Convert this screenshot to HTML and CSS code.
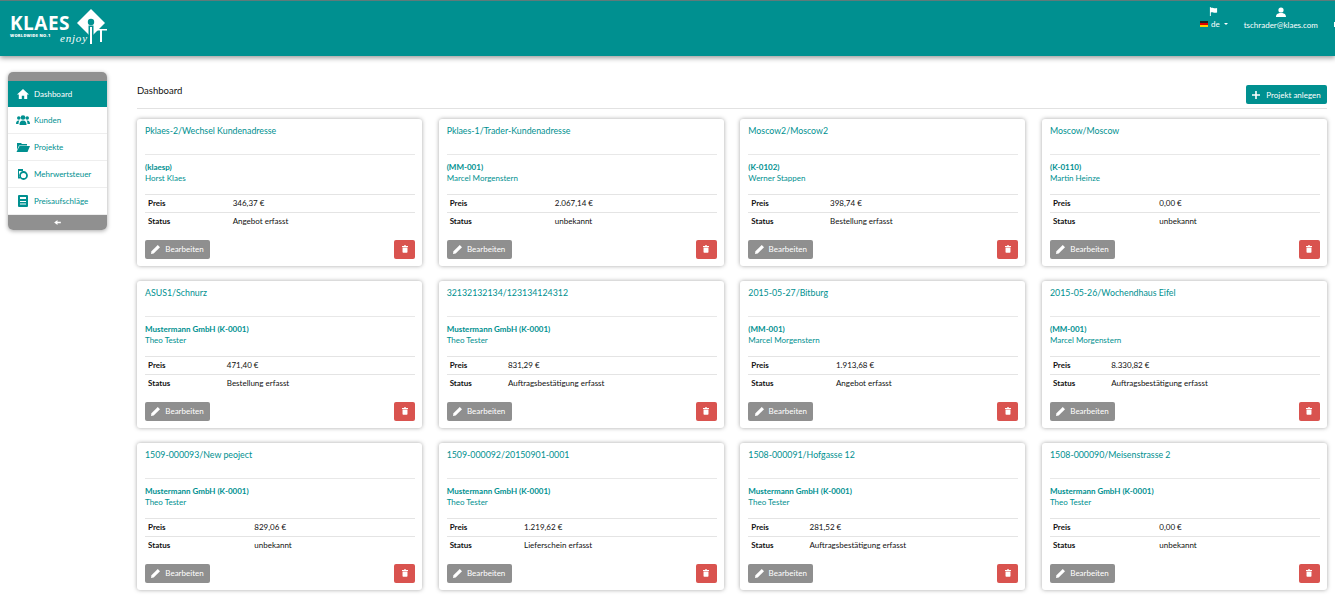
FILE: index.html
```html
<!DOCTYPE html>
<html lang="de">
<head>
<meta charset="utf-8">
<title>KLAES Dashboard</title>
<link rel="stylesheet" href="styles.css">
</head>
<body>
<header class="topbar">
  <div class="logo">
    <div class="logo-text"><span class="logo-name">KLAES</span><span class="logo-sub">WORLDWIDE NO.1</span></div>
    <span class="logo-enjoy">enjoy</span>
    <svg class="logo-mark" viewBox="0 0 30 36" width="30" height="36"><path d="M14 0 28 14 14 28 0 14Z" fill="#fff"/><circle cx="14" cy="13" r="3.200" fill="#009090"/><path d="M11.500 16.500h5V28h-5z" fill="#009090"/><path d="M13 18h2v17h-2zM18 20h12v1.500h-5V33h-2V21.500h-5z" fill="#fff"/></svg>
  </div>
  <div class="top-right">
    <div class="top-item">
      <svg class="top-icon" viewBox="0 0 10 10" width="9" height="9"><path d="M1 0h1v10H1zM2 1c2-1 3 1 7 0v5c-4 1-5-1-7 0z" fill="#fff"/></svg>
      <div class="lang"><span class="flag"></span><span>de</span><span class="caret"></span></div>
    </div>
    <div class="top-item">
      <svg class="top-icon" viewBox="0 0 10 10" width="10" height="10"><circle cx="5" cy="3" r="2.600" fill="#fff"/><path d="M0 10c0-3 2-3.500 3.500-4h3C8 6.500 10 7 10 10z" fill="#fff"/></svg>
      <span>tschrader@klaes.com</span>
    </div>
    <div class="top-sliver"></div>
  </div>
</header>
<div class="page">
  <nav class="sidebar">
    <div class="side-cap"></div>
    <a class="side-link active"><svg viewBox="0 0 14 12" width="14" height="12"><path d="M7 1 1 6.500h1.800V11h3V7.800h2.400V11h3V6.500H13z" fill="currentColor"/></svg><span>Dashboard</span></a>
    <a class="side-link"><svg viewBox="0 0 14 10" width="14" height="10"><circle cx="7" cy="2.500" r="2.300" fill="currentColor"/><circle cx="2.800" cy="3" r="1.800" fill="currentColor"/><circle cx="11.200" cy="3" r="1.800" fill="currentColor"/><path d="M3.500 10c0-3 1-4.500 3.500-4.500s3.500 1.500 3.500 4.500zM0 9c0-2 .8-3.500 2.800-3.500l.6.100C2.700 6.500 2.500 8 2.500 9zM14 9c0-2-.8-3.500-2.800-3.500l-.6.100c.7.900.9 2.400.9 3.400z" fill="currentColor"/></svg><span>Kunden</span></a>
    <a class="side-link"><svg viewBox="0 0 14 10" width="14" height="10"><path d="M1 1h4l1 1h5v1.500H3L1 8z" fill="currentColor"/><path d="M3.500 4H14l-2.500 6H.5z" fill="currentColor"/></svg><span>Projekte</span></a>
    <a class="side-link"><svg viewBox="0 0 14 12" width="14" height="12"><path d="M2 1h5v2H3v6h1v1.500H2z" fill="currentColor"/><circle cx="7.500" cy="7.500" r="3.500" fill="none" stroke="currentColor" stroke-width="1.800"/></svg><span>Mehrwertsteuer</span></a>
    <a class="side-link"><svg viewBox="0 0 14 12" width="14" height="12"><path fill-rule="evenodd" d="M3 0h8a1 1 0 0 1 1 1v10a1 1 0 0 1-1 1H3a1 1 0 0 1-1-1V1a1 1 0 0 1 1-1zM4 2v2h6V2zM4 6v1h6V6zM4 8.500v1h6v-1z" fill="currentColor"/></svg><span>Preisaufschläge</span></a>
    <div class="side-foot"><svg viewBox="0 0 8 6" width="7" height="5"><path d="M4 0v2h4v2H4v2L0 3z" fill="#fff"/></svg></div>
  </nav>
  <main class="content">
    <div class="title-row">
      <h1>Dashboard</h1>
      <button class="btn-new"><svg viewBox="0 0 10 10" width="8" height="8"><path d="M4 0h2v4h4v2H6v4H4V6H0V4h4z" fill="#fff"/></svg><span>Projekt anlegen</span></button>
    </div>
    <div class="grid">

      <article class="card">
        <h2>Pklaes-2/Wechsel Kundenadresse</h2>
        <div class="cust"><b>(klaesp)</b><span>Horst Klaes</span></div>
        <table><tr><th>Preis</th><td>346,37 €</td></tr><tr><th>Status</th><td>Angebot erfasst</td></tr></table>
        <div class="actions"><button class="btn-edit"><svg viewBox="0 0 10 10" width="9" height="9"><path d="M7.500 0 10 2.500 3 9.500 0 10l.5-3z" fill="#fff"/></svg><span>Bearbeiten</span></button><button class="btn-del"><svg viewBox="0 0 8 10" width="6" height="8"><path d="M3 0h2l.5 1H8v1.200H0V1h2.500zM.7 3h6.600v6a1 1 0 0 1-1 1H1.700a1 1 0 0 1-1-1z" fill="#fff"/></svg></button></div>
      </article>

      <article class="card">
        <h2>Pklaes-1/Trader-Kundenadresse</h2>
        <div class="cust"><b>(MM-001)</b><span>Marcel Morgenstern</span></div>
        <table><tr><th>Preis</th><td>2.067,14 €</td></tr><tr><th>Status</th><td>unbekannt</td></tr></table>
        <div class="actions"><button class="btn-edit"><svg viewBox="0 0 10 10" width="9" height="9"><path d="M7.500 0 10 2.500 3 9.500 0 10l.5-3z" fill="#fff"/></svg><span>Bearbeiten</span></button><button class="btn-del"><svg viewBox="0 0 8 10" width="6" height="8"><path d="M3 0h2l.5 1H8v1.200H0V1h2.500zM.7 3h6.600v6a1 1 0 0 1-1 1H1.700a1 1 0 0 1-1-1z" fill="#fff"/></svg></button></div>
      </article>

      <article class="card">
        <h2>Moscow2/Moscow2</h2>
        <div class="cust"><b>(K-0102)</b><span>Werner Stappen</span></div>
        <table><tr><th>Preis</th><td>398,74 €</td></tr><tr><th>Status</th><td>Bestellung erfasst</td></tr></table>
        <div class="actions"><button class="btn-edit"><svg viewBox="0 0 10 10" width="9" height="9"><path d="M7.500 0 10 2.500 3 9.500 0 10l.5-3z" fill="#fff"/></svg><span>Bearbeiten</span></button><button class="btn-del"><svg viewBox="0 0 8 10" width="6" height="8"><path d="M3 0h2l.5 1H8v1.200H0V1h2.500zM.7 3h6.600v6a1 1 0 0 1-1 1H1.700a1 1 0 0 1-1-1z" fill="#fff"/></svg></button></div>
      </article>

      <article class="card">
        <h2>Moscow/Moscow</h2>
        <div class="cust"><b>(K-0110)</b><span>Martin Heinze</span></div>
        <table><tr><th>Preis</th><td>0,00 €</td></tr><tr><th>Status</th><td>unbekannt</td></tr></table>
        <div class="actions"><button class="btn-edit"><svg viewBox="0 0 10 10" width="9" height="9"><path d="M7.500 0 10 2.500 3 9.500 0 10l.5-3z" fill="#fff"/></svg><span>Bearbeiten</span></button><button class="btn-del"><svg viewBox="0 0 8 10" width="6" height="8"><path d="M3 0h2l.5 1H8v1.200H0V1h2.500zM.7 3h6.600v6a1 1 0 0 1-1 1H1.700a1 1 0 0 1-1-1z" fill="#fff"/></svg></button></div>
      </article>

      <article class="card">
        <h2>ASUS1/Schnurz</h2>
        <div class="cust"><b>Mustermann GmbH (K-0001)</b><span>Theo Tester</span></div>
        <table><tr><th>Preis</th><td>471,40 €</td></tr><tr><th>Status</th><td>Bestellung erfasst</td></tr></table>
        <div class="actions"><button class="btn-edit"><svg viewBox="0 0 10 10" width="9" height="9"><path d="M7.500 0 10 2.500 3 9.500 0 10l.5-3z" fill="#fff"/></svg><span>Bearbeiten</span></button><button class="btn-del"><svg viewBox="0 0 8 10" width="6" height="8"><path d="M3 0h2l.5 1H8v1.200H0V1h2.500zM.7 3h6.600v6a1 1 0 0 1-1 1H1.700a1 1 0 0 1-1-1z" fill="#fff"/></svg></button></div>
      </article>

      <article class="card">
        <h2>32132132134/123134124312</h2>
        <div class="cust"><b>Mustermann GmbH (K-0001)</b><span>Theo Tester</span></div>
        <table><tr><th>Preis</th><td>831,29 €</td></tr><tr><th>Status</th><td>Auftragsbestätigung erfasst</td></tr></table>
        <div class="actions"><button class="btn-edit"><svg viewBox="0 0 10 10" width="9" height="9"><path d="M7.500 0 10 2.500 3 9.500 0 10l.5-3z" fill="#fff"/></svg><span>Bearbeiten</span></button><button class="btn-del"><svg viewBox="0 0 8 10" width="6" height="8"><path d="M3 0h2l.5 1H8v1.200H0V1h2.500zM.7 3h6.600v6a1 1 0 0 1-1 1H1.700a1 1 0 0 1-1-1z" fill="#fff"/></svg></button></div>
      </article>

      <article class="card">
        <h2>2015-05-27/Bitburg</h2>
        <div class="cust"><b>(MM-001)</b><span>Marcel Morgenstern</span></div>
        <table><tr><th>Preis</th><td>1.913,68 €</td></tr><tr><th>Status</th><td>Angebot erfasst</td></tr></table>
        <div class="actions"><button class="btn-edit"><svg viewBox="0 0 10 10" width="9" height="9"><path d="M7.500 0 10 2.500 3 9.500 0 10l.5-3z" fill="#fff"/></svg><span>Bearbeiten</span></button><button class="btn-del"><svg viewBox="0 0 8 10" width="6" height="8"><path d="M3 0h2l.5 1H8v1.200H0V1h2.500zM.7 3h6.600v6a1 1 0 0 1-1 1H1.700a1 1 0 0 1-1-1z" fill="#fff"/></svg></button></div>
      </article>

      <article class="card">
        <h2>2015-05-26/Wochendhaus Eifel</h2>
        <div class="cust"><b>(MM-001)</b><span>Marcel Morgenstern</span></div>
        <table><tr><th>Preis</th><td>8.330,82 €</td></tr><tr><th>Status</th><td>Auftragsbestätigung erfasst</td></tr></table>
        <div class="actions"><button class="btn-edit"><svg viewBox="0 0 10 10" width="9" height="9"><path d="M7.500 0 10 2.500 3 9.500 0 10l.5-3z" fill="#fff"/></svg><span>Bearbeiten</span></button><button class="btn-del"><svg viewBox="0 0 8 10" width="6" height="8"><path d="M3 0h2l.5 1H8v1.200H0V1h2.500zM.7 3h6.600v6a1 1 0 0 1-1 1H1.700a1 1 0 0 1-1-1z" fill="#fff"/></svg></button></div>
      </article>

      <article class="card">
        <h2>1509-000093/New peoject</h2>
        <div class="cust"><b>Mustermann GmbH (K-0001)</b><span>Theo Tester</span></div>
        <table><tr><th>Preis</th><td>829,06 €</td></tr><tr><th>Status</th><td>unbekannt</td></tr></table>
        <div class="actions"><button class="btn-edit"><svg viewBox="0 0 10 10" width="9" height="9"><path d="M7.500 0 10 2.500 3 9.500 0 10l.5-3z" fill="#fff"/></svg><span>Bearbeiten</span></button><button class="btn-del"><svg viewBox="0 0 8 10" width="6" height="8"><path d="M3 0h2l.5 1H8v1.200H0V1h2.500zM.7 3h6.600v6a1 1 0 0 1-1 1H1.700a1 1 0 0 1-1-1z" fill="#fff"/></svg></button></div>
      </article>

      <article class="card">
        <h2>1509-000092/20150901-0001</h2>
        <div class="cust"><b>Mustermann GmbH (K-0001)</b><span>Theo Tester</span></div>
        <table><tr><th>Preis</th><td>1.219,62 €</td></tr><tr><th>Status</th><td>Lieferschein erfasst</td></tr></table>
        <div class="actions"><button class="btn-edit"><svg viewBox="0 0 10 10" width="9" height="9"><path d="M7.500 0 10 2.500 3 9.500 0 10l.5-3z" fill="#fff"/></svg><span>Bearbeiten</span></button><button class="btn-del"><svg viewBox="0 0 8 10" width="6" height="8"><path d="M3 0h2l.5 1H8v1.200H0V1h2.500zM.7 3h6.600v6a1 1 0 0 1-1 1H1.700a1 1 0 0 1-1-1z" fill="#fff"/></svg></button></div>
      </article>

      <article class="card">
        <h2>1508-000091/Hofgasse 12</h2>
        <div class="cust"><b>Mustermann GmbH (K-0001)</b><span>Theo Tester</span></div>
        <table><tr><th>Preis</th><td>281,52 €</td></tr><tr><th>Status</th><td>Auftragsbestätigung erfasst</td></tr></table>
        <div class="actions"><button class="btn-edit"><svg viewBox="0 0 10 10" width="9" height="9"><path d="M7.500 0 10 2.500 3 9.500 0 10l.5-3z" fill="#fff"/></svg><span>Bearbeiten</span></button><button class="btn-del"><svg viewBox="0 0 8 10" width="6" height="8"><path d="M3 0h2l.5 1H8v1.200H0V1h2.500zM.7 3h6.600v6a1 1 0 0 1-1 1H1.700a1 1 0 0 1-1-1z" fill="#fff"/></svg></button></div>
      </article>

      <article class="card">
        <h2>1508-000090/Meisenstrasse 2</h2>
        <div class="cust"><b>Mustermann GmbH (K-0001)</b><span>Theo Tester</span></div>
        <table><tr><th>Preis</th><td>0,00 €</td></tr><tr><th>Status</th><td>unbekannt</td></tr></table>
        <div class="actions"><button class="btn-edit"><svg viewBox="0 0 10 10" width="9" height="9"><path d="M7.500 0 10 2.500 3 9.500 0 10l.5-3z" fill="#fff"/></svg><span>Bearbeiten</span></button><button class="btn-del"><svg viewBox="0 0 8 10" width="6" height="8"><path d="M3 0h2l.5 1H8v1.200H0V1h2.500zM.7 3h6.600v6a1 1 0 0 1-1 1H1.700a1 1 0 0 1-1-1z" fill="#fff"/></svg></button></div>
      </article>

    </div>
  </main>
</div>
</body>
</html>
```
FILE: styles.css
```css
* { box-sizing: border-box; }
html, body { margin: 0; padding: 0; overflow: hidden; }
body { width: 1335px; height: 600px; background: #fff; font-family: Lato, sans-serif; font-size: 8px; color: #111; }

.topbar { height: 56px; background: #009090; border-top: 1px solid #5f7a7a; box-shadow: 0 2px 5px rgba(0,0,0,.4); display: flex; color: #fff; overflow: hidden; }
.logo { position: relative; flex: none; display: flex; width: 120px; padding: 13px 0 0 10px; font-family: "Open Sans", sans-serif; }
.logo-text { display: flex; flex-direction: column; }
.logo-name { font-weight: 700; font-size: 19px; line-height: 19px; letter-spacing: .5px; }
.logo-sub { font-weight: 800; font-size: 4px; line-height: 6px; letter-spacing: .25px; }
.logo-enjoy { position: absolute; left: 60px; top: 31px; font-family: "Liberation Serif", serif; font-style: italic; font-size: 11px; letter-spacing: .8px; }
.logo-mark { position: absolute; left: 77px; top: 8px; }
.top-right { display: flex; flex: none; gap: 16px; margin-left: 1080px; padding-top: 6px; }
.top-item { display: flex; flex-direction: column; align-items: center; gap: 3px; }
.top-sliver { width: 1px; height: 5px; margin: 15px 0 0 0; background: #fff; }
.top-icon { display: block; }
.lang { display: flex; align-items: center; gap: 3px; }
.flag { width: 8px; height: 6px; background: linear-gradient(#222 33%, #d00 33%, #d00 66%, #fc0 66%); }
.caret { border: 2px solid transparent; border-top-color: #fff; border-bottom: 0; margin-left: 1px; }

.page { display: flex; align-items: flex-start; padding: 16px 8px 0; gap: 30px; }
.sidebar { width: 99px; flex: none; background: #fff; border-radius: 5px; overflow: hidden; box-shadow: 0 1px 4px rgba(0,0,0,.35); color: #009090; }
.side-cap { height: 9px; background: #909090; }
.side-foot { height: 15px; background: #909090; display: flex; align-items: center; justify-content: center; }
.side-link { height: 27px; display: flex; align-items: center; border-bottom: 1px solid #eee; padding-left: 8px; }
.side-link svg { flex: none; margin-right: 4px; }
.side-link.active { height: 26px; background: #009090; color: #fff; border-bottom: 0; }

.content { flex: 1; min-width: 0; }
.title-row { height: 37px; display: flex; justify-content: space-between; align-items: flex-start; border-bottom: 1px solid #e2e2e2; margin-bottom: 10px; }
h1 { margin: 12px 0 0; font-size: 9.500px; font-weight: 400; line-height: 13px; }
.btn-new { margin-top: 13px; width: 81px; height: 19px; border: 0; border-radius: 2px; background: #009090; color: #fff; font: inherit; display: flex; align-items: center; justify-content: center; gap: 6px; padding: 0; }

.grid { display: grid; grid-template-columns: repeat(4, 285px); column-gap: 16.670px; row-gap: 15px; }
.card { height: 147px; background: #fff; border-radius: 3px; box-shadow: 0 0 4px rgba(0,0,0,.35); padding: 6px 7px 0 8px; display: flex; flex-direction: column; }
h2 { margin: 0; height: 30px; font-size: 8.800px; font-weight: 400; line-height: 12px; color: #009090; border-bottom: 1px solid #e8e8e8; }
.cust { height: 39px; padding-top: 7px; display: flex; flex-direction: column; line-height: 11px; color: #009090; }
.cust b { font-weight: 700; }
table { width: 100%; border-collapse: collapse; }
tr { border-top: 1px solid #e4e4e4; }
th, td { text-align: left; padding: 0 3px; height: 18px; line-height: 11px; white-space: nowrap; }
th { font-weight: 700; }
.actions { display: flex; justify-content: space-between; margin-top: 9px; }
.actions button { height: 19px; border: 0; border-radius: 2px; color: #fff; font: inherit; display: flex; align-items: center; justify-content: center; padding: 0; }
.btn-edit { width: 65px; background: #8f8f8f; gap: 5px; }
.btn-del { width: 21px; background: #d9534f; }
```
